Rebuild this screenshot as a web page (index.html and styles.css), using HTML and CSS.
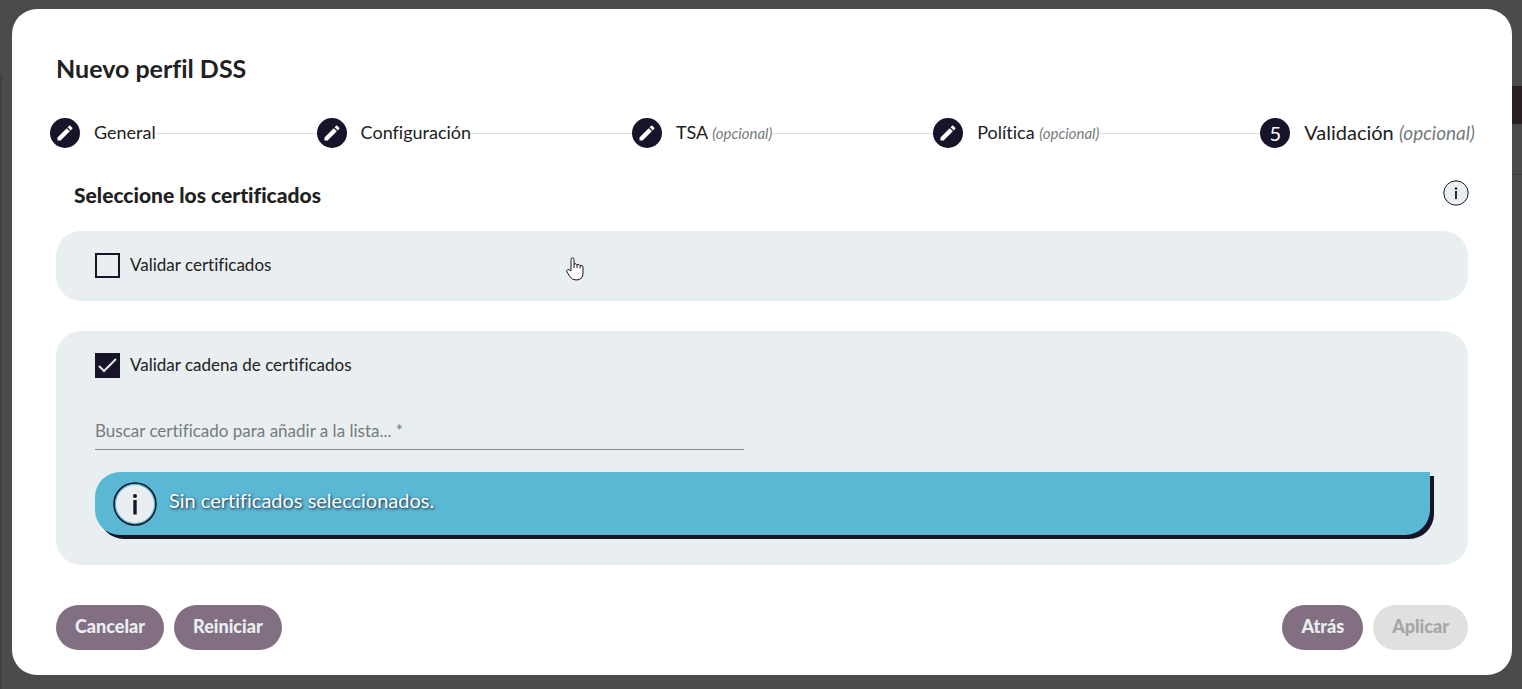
FILE: index.html
```
<!DOCTYPE html>
<html lang="es">

<head>
    <meta charset="UTF-8">
    <meta name="viewport" content="width=device-width, initial-scale=1">
    <title>Nuevo perfil DSS</title>
    <link rel="stylesheet" href="styles.css">
</head>

<body>
    <svg class="sprite" width="0" height="0" aria-hidden="true">
        <symbol id="pencil" viewBox="0 0 24 24">
            <path d="M3 17.25V21h3.75L17.81 9.94l-3.75-3.75L3 17.25zM20.71 7.04a1 1 0 0 0 0-1.41l-2.34-2.34a1 1 0 0 0-1.41 0l-1.83 1.83 3.75 3.75 1.83-1.83z" />
        </symbol>
        <symbol id="info" viewBox="0 0 44 44">
            <circle class="ring" cx="22" cy="22" r="21" />
            <circle class="disc" cx="22" cy="22" r="19" />
            <circle class="mark" cx="22" cy="14" r="2" />
            <path class="mark" d="M20.300 18h3.400v14.500h-3.400z" />
        </symbol>
    </svg>

    <!-- Page behind the dialog -->
    <div class="backdrop" aria-hidden="true">
        <div class="side"></div>
        <div class="behind">
            <div class="bar"></div>
            <div class="rule"></div>
        </div>
    </div>

    <main class="dialog" role="dialog" aria-labelledby="dialog-title">
        <h1 id="dialog-title">Nuevo perfil DSS</h1>

        <ol class="stepper">
            <li class="step">
                <span class="step-icon"><svg><use href="#pencil" /></svg></span>
                <span class="step-label">General</span>
            </li>
            <li class="step">
                <span class="step-icon"><svg><use href="#pencil" /></svg></span>
                <span class="step-label">Configuración</span>
            </li>
            <li class="step">
                <span class="step-icon"><svg><use href="#pencil" /></svg></span>
                <span class="step-label">TSA <i>(opcional)</i></span>
            </li>
            <li class="step">
                <span class="step-icon"><svg><use href="#pencil" /></svg></span>
                <span class="step-label">Política <i>(opcional)</i></span>
            </li>
            <li class="step active" aria-current="step">
                <span class="step-icon">5</span>
                <span class="step-label">Validación <i>(opcional)</i></span>
            </li>
        </ol>

        <form>
            <div class="section-head">
                <h2>Seleccione los certificados</h2>
                <button type="button" class="help" aria-label="Información">
                    <svg viewBox="0 0 26 26">
                        <circle class="help-disc" cx="13" cy="13" r="12.200" />
                        <circle class="mark" cx="13" cy="8.500" r="1.2" />
                        <path class="mark" d="M12.100 11h1.800v8h-1.800z" />
                    </svg>
                </button>
            </div>

            <section class="panel">
                <label class="check">
                    <input type="checkbox">
                    <span>Validar certificados</span>
                </label>
                <svg class="cursor" viewBox="0 0 18 24" aria-hidden="true">
                    <path d="M5 14V2.5q0-1.700 1.500-1.700T8 2.500V7q2.500-1 3 .8 2.500-.8 3 .8 3-.5 3 1.400V16q0 7-7 7-4 0-6.200-3.500L1 15q-.8-1.800.5-2.300Q3.300 12 5 14z" />
                    <path d="M8 7v4M11 7.500V11M14 8.500V11.500" />
                </svg>
            </section>

            <section class="panel">
                <label class="check">
                    <input type="checkbox" checked>
                    <span>Validar cadena de certificados</span>
                </label>
                <input type="text" class="search" aria-label="Buscar certificado"
                    placeholder="Buscar certificado para añadir a la lista... *">
                <div class="notice" role="status">
                    <svg><use href="#info" /></svg>
                    <p>Sin certificados seleccionados.</p>
                </div>
            </section>

            <footer>
                <button type="button">Cancelar</button>
                <button type="reset">Reiniciar</button>
                <button type="button" class="back">Atrás</button>
                <button type="submit" disabled>Aplicar</button>
            </footer>
        </form>
    </main>
</body>

</html>
```
FILE: styles.css
```
:root {
    --dark: #17142a;
    --text: #212121;
    --panel: #e9eff1;
    --button: #836f82;
    --notice: #5bb8d4;
}

* {
    box-sizing: border-box;
}

body {
    display: grid;
    min-height: 100vh;
    margin: 0;
    background-color: #4b4b4b;
    color: var(--text);
    font-family: Lato, "Open Sans", sans-serif;
    font-size: 17px;
    font-variant-ligatures: none;
}

.sprite {
    position: absolute;
}

.backdrop {
    grid-area: 1 / 1;
    display: flex;
    justify-content: space-between;
}

.side {
    width: 2px;
    margin-top: 74px;
    background-color: #404040;
}

.behind {
    width: 10px;
    padding-top: 86px;
}

.bar {
    height: 38px;
    margin-bottom: 50px;
    background-color: #271f24;
}

.rule {
    height: 1px;
    background-color: #404040;
}

.dialog {
    grid-area: 1 / 1;
    align-self: start;
    margin: 9px 10px 14px 12px;
    padding: 44px 44px 25px;
    border-radius: 25px;
    background-color: #fff;
}

h1 {
    margin: 0;
    font-size: 25px;
    line-height: 30px;
}

.stepper {
    display: flex;
    margin: 34px -7px 0 -6px;
    padding: 0;
    list-style: none;
}

.step {
    display: flex;
    flex: 1 1 auto;
    align-items: center;
    height: 32px;
    font-size: 18px;
    white-space: nowrap;
}

.step:last-child {
    flex-grow: 0;
}

.step:not(:last-child)::after {
    content: "";
    flex: 1;
    height: 1px;
    background-color: #dedede;
}

.step-icon {
    display: grid;
    place-items: center;
    width: 30px;
    height: 30px;
    margin-right: 14px;
    border-radius: 50%;
    background-color: var(--dark);
    color: #fff;
}

.step-icon svg {
    width: 20px;
    height: 20px;
    fill: #fff;
}

.step-label {
    padding-bottom: 2px;
}

.step i {
    color: #757b80;
    font-size: 15px;
}

.step.active {
    font-size: 20px;
}

.step.active i {
    font-size: 19px;
}

.section-head {
    display: flex;
    justify-content: space-between;
    align-items: center;
    height: 36px;
    margin: 27px -1px 19px 18px;
}

h2 {
    margin: 0;
    font-size: 21px;
    font-weight: 900;
}

.help {
    width: 26px;
    height: 26px;
    margin-bottom: 2px;
    padding: 0;
    border: none;
    background: none;
    cursor: pointer;
}

.help svg {
    display: block;
}

.help-disc {
    fill: var(--panel);
    stroke: var(--dark);
}

.mark {
    fill: var(--dark);
}

.panel {
    position: relative;
    margin-bottom: 30px;
    padding: 20px 38px 20px 39px;
    border-radius: 25px;
    background-color: var(--panel);
}

.panel:last-of-type {
    margin-bottom: 40px;
    padding-bottom: 30px;
}

.check {
    display: flex;
    align-items: center;
    gap: 10px;
    width: fit-content;
    height: 30px;
    padding-bottom: 2px;
}

.check span {
    padding-bottom: 1px;
}

.check input {
    appearance: none;
    width: 25px;
    height: 25px;
    margin: 0;
    border: 2px solid var(--dark);
}

.check input:checked {
    background: var(--dark) url("data:image/svg+xml,%3Csvg xmlns='http://www.w3.org/2000/svg' viewBox='0 0 21 21'%3E%3Cpath d='M2 11l5 5L19 4' fill='none' stroke='%23e9eff1' stroke-width='2'/%3E%3C/svg%3E");
}

/* Pointer resting on the first panel */
.cursor {
    position: absolute;
    top: 26px;
    left: 510px;
    width: 18px;
    height: 24px;
    fill: #fff;
    stroke: var(--dark);
}

.search {
    display: block;
    width: 649px;
    max-width: 100%;
    height: 36px;
    margin: 33px 0 22px;
    padding: 0 0 2px;
    border: none;
    border-bottom: 1px solid #858a8c;
    background: none;
    color: var(--text);
    font: inherit;
    font-variant-ligatures: none;
}

.search::placeholder {
    color: #757b7d;
    opacity: 1;
}

.notice {
    display: flex;
    align-items: center;
    gap: 12px;
    height: 63px;
    padding: 0 18px;
    border-radius: 25px 0 25px 25px;
    background-color: var(--notice);
    box-shadow: 4px 4px 0 var(--dark);
}

.notice svg {
    width: 44px;
    height: 44px;
}

.ring {
    fill: none;
    stroke: var(--dark);
    stroke-width: 1.5;
}

.disc {
    fill: var(--panel);
}

.notice p {
    margin: 0 0 7px;
    color: #fff;
    font-size: 20px;
    text-shadow: 1px 1px 3px var(--dark);
}

footer {
    display: flex;
    gap: 10px;
}

footer button {
    height: 45px;
    padding: 0 19px 3px;
    border: none;
    border-radius: 23px;
    background-color: var(--button);
    color: var(--panel);
    font: inherit;
    font-size: 18px;
    font-weight: 900;
    cursor: pointer;
}

footer button:disabled {
    background-color: #e0e0e0;
    color: #a6a6a6;
    cursor: default;
}

.back {
    margin-left: auto;
}
```
